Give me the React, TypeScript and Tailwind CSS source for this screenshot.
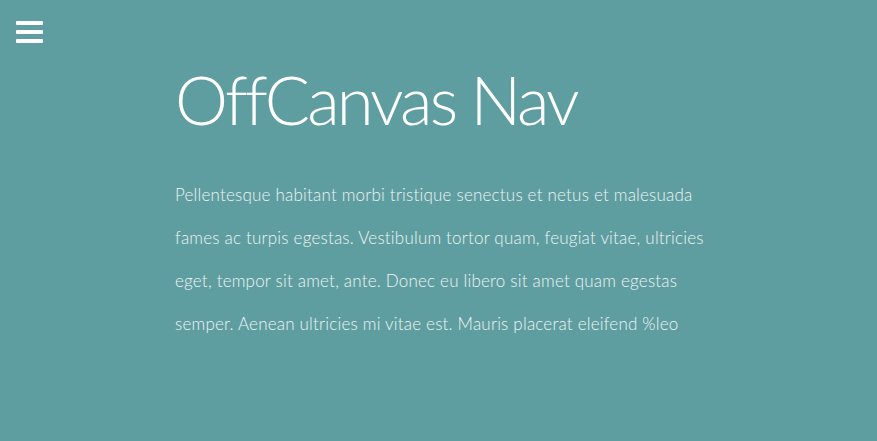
export default function App() {
  return (
    <div className="relative h-[441px] w-[877px] overflow-hidden bg-[#5f9ea0]" style={{ fontFamily: "Lato, 'Noto Sans', sans-serif" }}>
      <button className="absolute left-4 top-[21px] flex h-[22px] w-[27px] flex-col justify-between" aria-label="menu">
        <span className="block h-[4px] w-full rounded-[1px] bg-white" />
        <span className="block h-[4px] w-full rounded-[1px] bg-white" />
        <span className="block h-[4px] w-full rounded-[1px] bg-white" />
      </button>
      <main className="pl-[175px] pt-[57px]">
        <h1 className="text-[67px] font-light leading-[84px] tracking-[-2.9px] text-white">OffCanvas Nav</h1>
        <p className="mt-[32px] text-[17px] font-light leading-[43px] tracking-[0.2px] text-[#eef4f4]">
          Pellentesque habitant morbi tristique senectus et netus et malesuada<br />
          fames ac turpis egestas. Vestibulum tortor quam, feugiat vitae, ultricies<br />
          eget, tempor sit amet, ante. Donec eu libero sit amet quam egestas<br />
          semper. Aenean ultricies mi vitae est. Mauris placerat eleifend %leo
        </p>
      </main>
    </div>
  );
}
